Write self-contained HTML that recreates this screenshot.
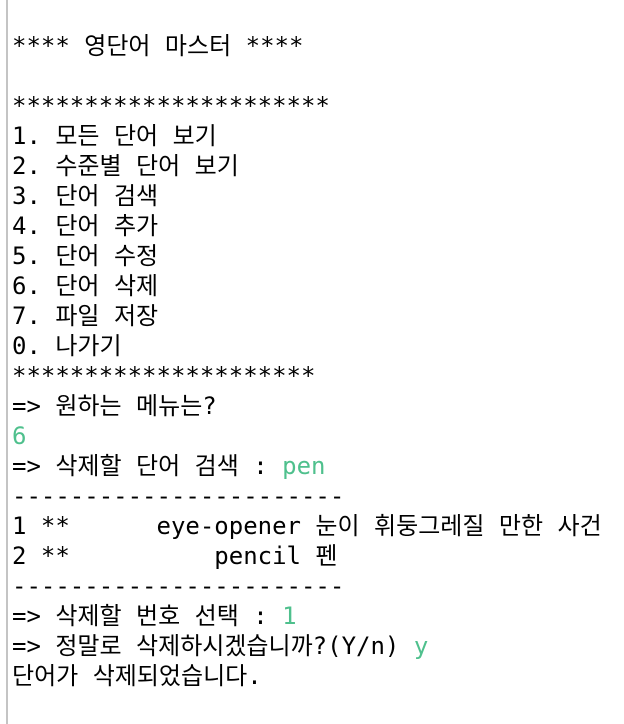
<!DOCTYPE html>
<html><head><meta charset="utf-8"><style>
html,body{margin:0;padding:0;background:#fff;width:624px;height:724px;overflow:hidden}
.b{position:absolute;left:6px;top:0;width:2px;height:724px;background:#c4c4c4}
pre{position:absolute;left:12px;top:31px;margin:0;font-family:"DejaVu Sans Mono","Noto Sans CJK KR",monospace;font-size:24px;line-height:30px;color:#000}
.g{color:#4fc08d}
</style></head><body><div class="b"></div><pre>**** 영단어 마스터 ****

**********************
1. 모든 단어 보기
2. 수준별 단어 보기
3. 단어 검색
4. 단어 추가
5. 단어 수정
6. 단어 삭제
7. 파일 저장
0. 나가기
*********************
=> 원하는 메뉴는?
<span class="g">6</span>
=> 삭제할 단어 검색 : <span class="g">pen</span>
-----------------------
1 **      eye-opener 눈이 휘둥그레질 만한 사건
2 **          pencil 펜
-----------------------
=> 삭제할 번호 선택 : <span class="g">1</span>
=> 정말로 삭제하시겠습니까?(Y/n) <span class="g">y</span>
단어가 삭제되었습니다.
</pre></body></html>
